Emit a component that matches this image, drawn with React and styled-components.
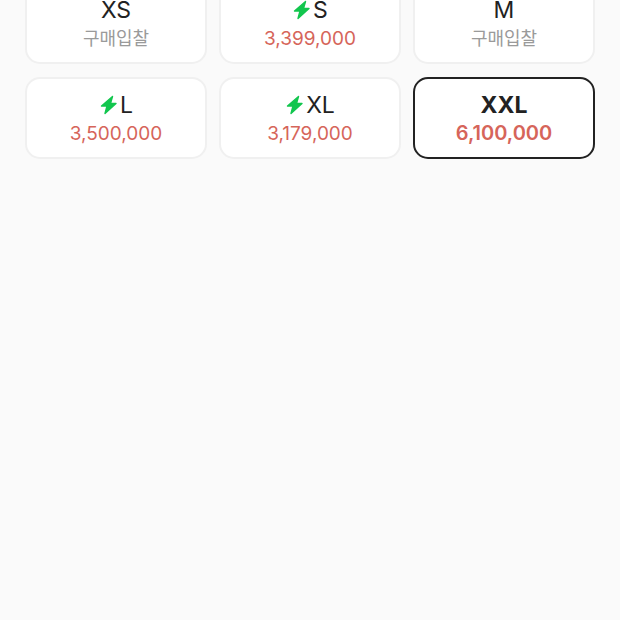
import React from 'react'
import styled, { createGlobalStyle } from 'styled-components'

const sizes = [
  { label: 'XS', price: '구매입찰' },
  { label: 'S', price: '3,399,000', fast: true },
  { label: 'M', price: '구매입찰' },
  { label: 'L', price: '3,500,000', fast: true },
  { label: 'XL', price: '3,179,000', fast: true },
  { label: 'XXL', price: '6,100,000', selected: true },
]

const GlobalStyle = createGlobalStyle`
  html, body {
    margin: 0;
    height: 100%;
    background: #fafafa;
    font-family: Inter, "Noto Sans CJK KR", sans-serif;
  }
`

const Page = styled.div`
  height: 620px;
  overflow: hidden;
`

const Grid = styled.div`
  display: grid;
  grid-template-columns: repeat(3, 182px);
  gap: 13px 12px;
  margin-top: -18px;
  padding: 0 25px;
`

const SizeCard = styled.button`
  display: flex;
  flex-direction: column;
  align-items: center;
  justify-content: center;
  gap: ${p => (p.$selected ? 1 : 2)}px;
  height: 82px;
  padding: ${p => (p.$selected ? 1 : 2)}px 0 0;
  box-sizing: border-box;
  background: #fff;
  border-radius: 15px;
  border: 2px solid ${p => (p.$selected ? '#222222' : '#f0f0f0')};
  font-family: inherit;
`

const SizeRow = styled.div`
  display: flex;
  align-items: center;
  gap: 3px;
  height: 28px;
  font-size: 23px;
  line-height: 28px;
  color: #222;
  font-weight: ${p => (p.$selected ? 700 : 400)};
`

const Price = styled.div`
  font-size: ${p => (p.$selected ? 20 : p.$muted ? 18 : 19)}px;
  line-height: 26px;
  color: ${p => (p.$muted ? '#9a9a9a' : '#d6655a')};
  font-weight: ${p => (p.$selected ? 600 : 400)};
`

const Bolt = () => (
  <svg width="18" height="20" viewBox="0 0 18 20">
    <path
      d="M13.5 1.5 L2.5 11 H8 L6 18.5 L17 8.5 H11.5 Z"
      fill="#12c64e"
      stroke="#12c64e"
      strokeWidth="1.4"
      strokeLinejoin="round"
    />
  </svg>
)

export default function App() {
  return (
    <Page>
      <GlobalStyle />
      <Grid>
        {sizes.map(s => (
          <SizeCard key={s.label} $selected={s.selected}>
            <SizeRow $selected={s.selected}>
              {s.fast && <Bolt />}
              {s.label}
            </SizeRow>
            <Price $selected={s.selected} $muted={s.price === '구매입찰'}>
              {s.price}
            </Price>
          </SizeCard>
        ))}
      </Grid>
    </Page>
  )
}
